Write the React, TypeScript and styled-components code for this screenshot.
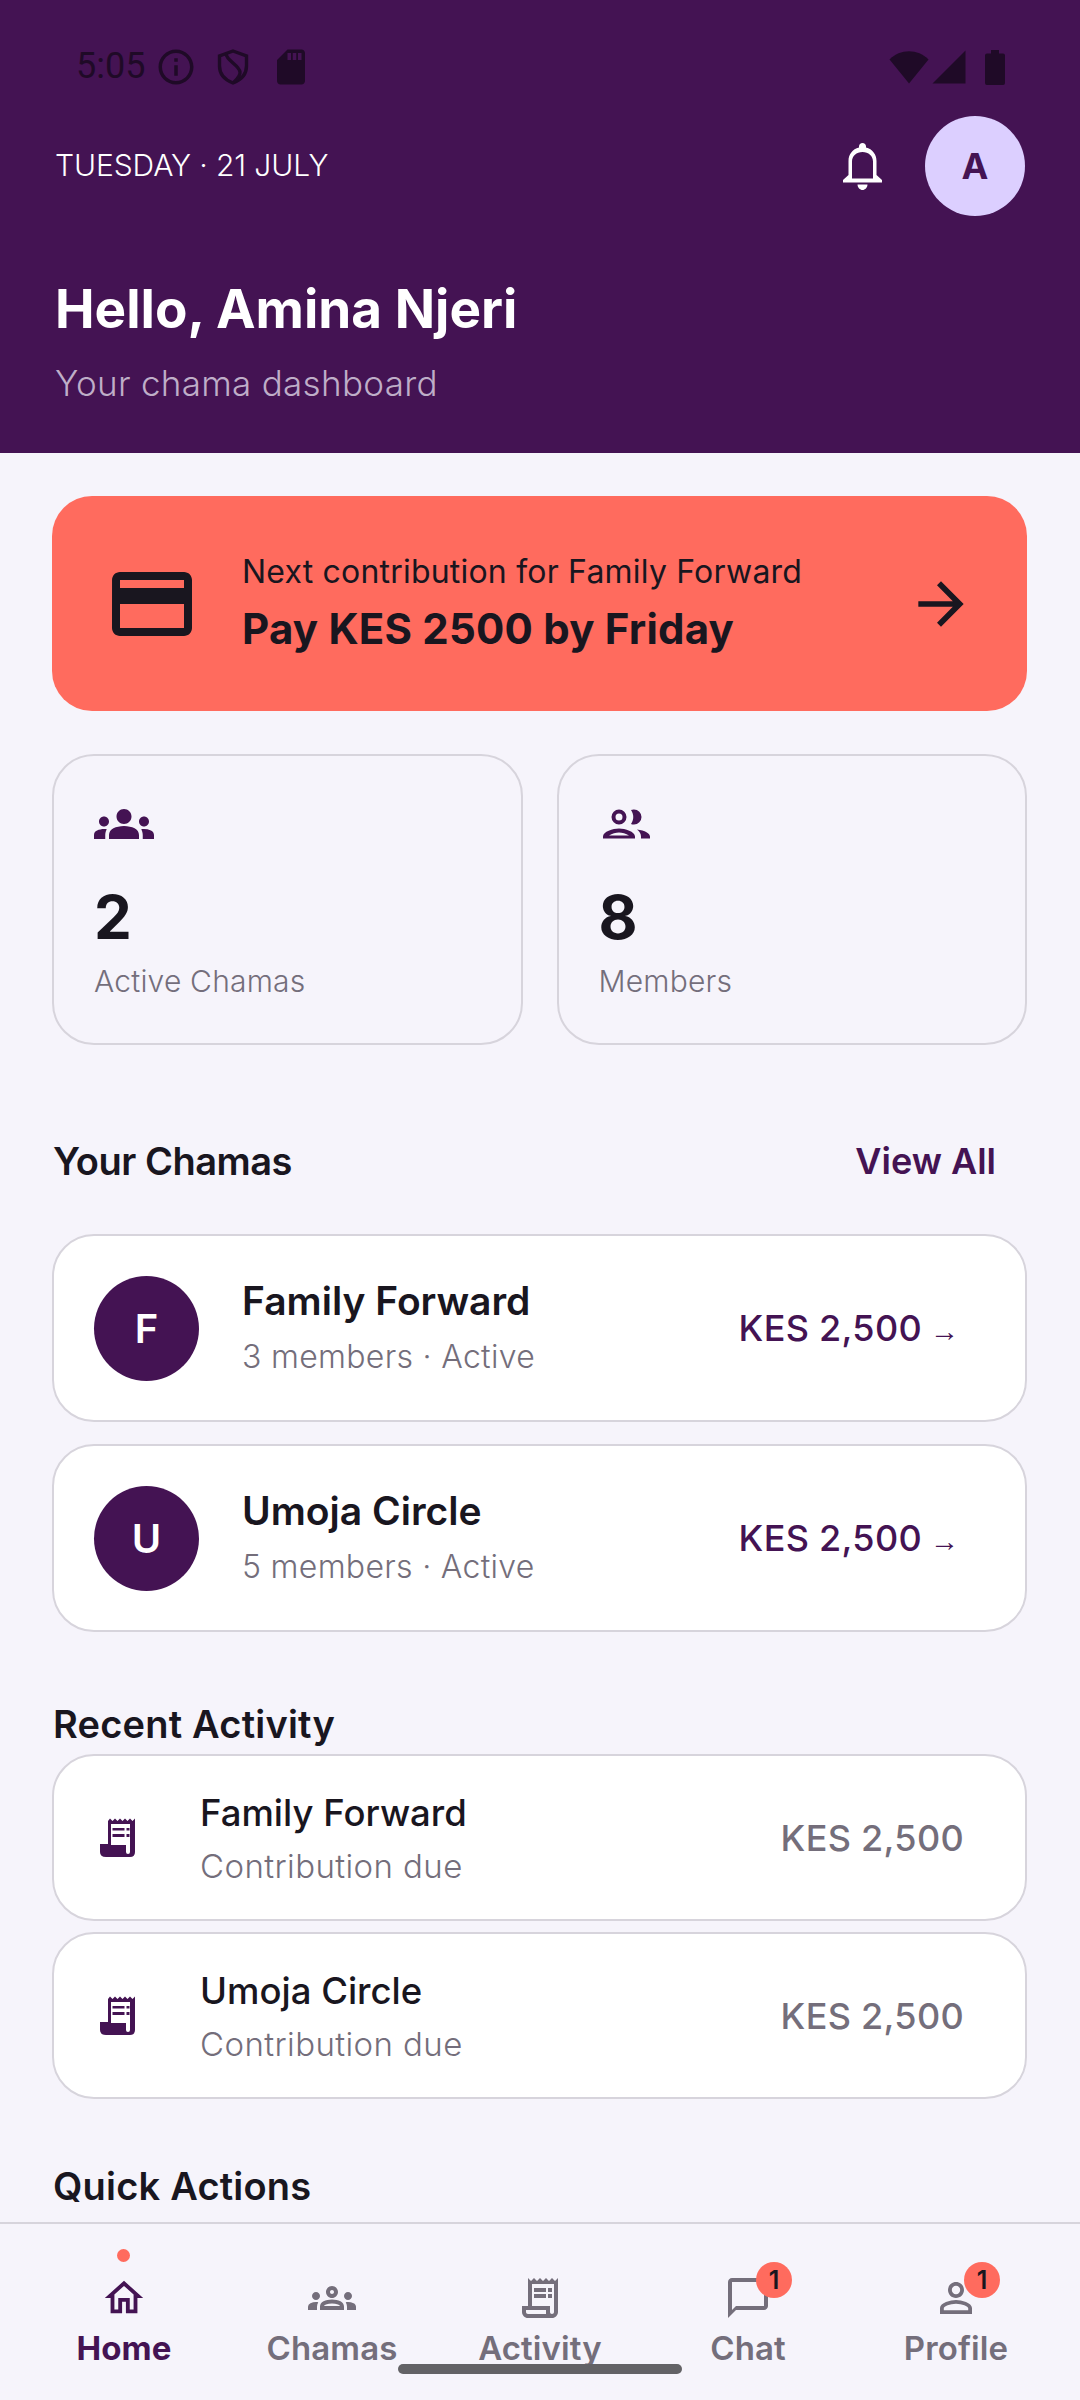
import { FunctionComponent, ReactNode } from "react";
import styled, { createGlobalStyle } from "styled-components";
import {
  MdArrowForward,
  MdChatBubbleOutline,
  MdGroups,
  MdInfoOutline,
  MdOutlineCreditCard,
  MdOutlineGroups,
  MdOutlineHome,
  MdOutlineReceiptLong,
  MdPersonOutline,
  MdSdCard,
} from "react-icons/md";

const PURPLE = "#441353";
const CORAL = "#ff6b5e";
const INK = "#19161f";
const MUTED = "#746e7b";
const LINE = "#d7d4dc";
const STATUS = "#1f0a27";
const PAGE = "#f6f4fb";

const Global = createGlobalStyle`
  html, body {
    margin: 0;
    padding: 0;
    background: ${PAGE};
  }

  * {
    box-sizing: border-box;
  }

  body {
    font-family: Inter, "Noto Sans", sans-serif;
  }
`;

const Screen = styled.div`
  position: relative;
  display: flex;
  flex-direction: column;

  width: 1080px;
  height: 2400px;
  overflow: hidden;

  background: ${PAGE};
`;

const Header = styled.header`
  flex: none;
  height: 453px;

  background: ${PURPLE};
`;

const StatusBar = styled.div`
  display: flex;
  justify-content: space-between;

  height: 116px;
  padding: 46px 75px 0 76px;

  color: ${STATUS};
`;

const StatusGroup = styled.div`
  display: flex;
  align-items: flex-start;
`;

const Clock = styled.span`
  width: 79px;

  font-family: Roboto, sans-serif;
  font-size: 36px;
  font-weight: 400;
  line-height: 40px;
`;

const StatusSlot = styled.span<{ $width: number; $gap?: number }>`
  display: flex;
  align-items: center;
  justify-content: center;

  width: ${(p) => p.$width}px;
  height: 42px;
  margin-left: ${(p) => p.$gap ?? 0}px;
`;

const TopRow = styled.div`
  display: flex;
  align-items: center;

  height: 100px;
  padding: 0 55px;
`;

const DateLabel = styled.span`
  flex: 1;
  margin-top: -2px;

  color: #fff;
  font-size: 30px;
  font-weight: 300;
  letter-spacing: -0.1px;
`;

const Bell = styled.span`
  display: flex;
  margin-right: 43px;

  color: #fff;
`;

const ProfileBubble = styled.div`
  display: flex;
  align-items: center;
  justify-content: center;

  width: 100px;
  height: 100px;

  border-radius: 50%;
  background: #dccfff;
  color: ${PURPLE};
  font-size: 36px;
  font-weight: 700;
`;

const Greeting = styled.h1`
  margin: 61px 0 0;
  padding-left: 55px;

  color: #fff;
  font-size: 53px;
  font-weight: 700;
  line-height: 64px;
`;

const Tagline = styled.p`
  margin: 20px 0 0;
  padding-left: 55px;

  color: #bfaec8;
  font-size: 35px;
  font-weight: 300;
  line-height: 44px;
  letter-spacing: 0.3px;
`;

const Scroll = styled.main`
  flex: 1;
  min-height: 0;
  overflow: hidden;

  padding: 43px 53px 0 52px;
`;

const PayCard = styled.div`
  display: flex;
  align-items: center;

  height: 215px;
  padding: 0 52px;

  border-radius: 40px;
  background: ${CORAL};
  color: ${INK};
`;

const PayText = styled.div`
  flex: 1;
  margin-left: 42px;
`;

const PayLabel = styled.div`
  font-size: 32px;
  font-weight: 400;
  line-height: 42px;
  letter-spacing: 0.2px;
`;

const PayAmount = styled.div`
  margin-top: 8px;

  font-size: 42px;
  font-weight: 700;
  line-height: 56px;
  letter-spacing: 0.2px;
`;

const Stats = styled.div`
  display: grid;
  grid-template-columns: 1fr 1fr;
  gap: 34px;

  margin-top: 43px;
`;

const StatCard = styled.div`
  height: 291px;
  padding: 38px 40px 0;

  border: 2px solid ${LINE};
  border-radius: 42px;
`;

const StatIcon = styled.div`
  display: flex;
  align-items: center;

  height: 60px;

  color: ${PURPLE};
`;

const StatValue = styled.div`
  margin-top: 28px;

  color: ${INK};
  font-size: 60px;
  font-weight: 700;
  line-height: 70px;
`;

const StatLabel = styled.div`
  margin-top: 9px;

  color: ${MUTED};
  font-size: 30px;
  font-weight: 300;
  line-height: 40px;
  letter-spacing: 0.2px;
`;

const SectionHead = styled.div<{ $top: number }>`
  display: flex;
  align-items: center;
  justify-content: space-between;

  height: 50px;
  margin-top: ${(p) => p.$top}px;
  padding-left: 1px;
  padding-right: 31px;
`;

const SectionTitle = styled.h2<{ $spacing: number }>`
  margin: 0;

  color: ${INK};
  font-size: 38px;
  font-weight: 600;
  line-height: 50px;
  letter-spacing: ${(p) => p.$spacing}px;
`;

const ViewAll = styled.span`
  color: ${PURPLE};
  font-size: 36px;
  font-weight: 600;
`;

const List = styled.div<{ $top: number; $gap: number }>`
  display: flex;
  flex-direction: column;
  gap: ${(p) => p.$gap}px;

  margin-top: ${(p) => p.$top}px;
`;

const RowCard = styled.div<{ $height: number; $right: number }>`
  display: flex;
  align-items: center;

  height: ${(p) => p.$height}px;
  padding: 0 ${(p) => p.$right}px 0 40px;

  border: 2px solid ${LINE};
  border-radius: 42px;
  background: #fff;
`;

const Initial = styled.div`
  display: flex;
  flex: none;
  align-items: center;
  justify-content: center;

  width: 105px;
  height: 105px;
  margin-right: 43px;

  border-radius: 50%;
  background: ${PURPLE};
  color: #fff;
  font-size: 40px;
  font-weight: 600;
`;

const RowIcon = styled.div`
  display: flex;
  flex: none;

  width: 48px;
  margin-right: 58px;
  padding-left: 6px;

  color: ${PURPLE};
`;

const RowText = styled.div`
  flex: 1;
`;

const ChamaName = styled.div`
  margin-top: -2px;

  color: ${INK};
  font-size: 39px;
  font-weight: 600;
  line-height: 50px;
`;

const ChamaMeta = styled.div`
  margin-top: 9px;

  color: ${MUTED};
  font-size: 32px;
  font-weight: 300;
  line-height: 44px;
  letter-spacing: 0.3px;
`;

const ActivityName = styled.div`
  margin-top: 2px;

  color: ${INK};
  font-size: 36.5px;
  font-weight: 500;
  line-height: 48px;
`;

const ActivityMeta = styled.div`
  margin-top: 7px;

  color: ${MUTED};
  font-size: 33px;
  font-weight: 300;
  line-height: 44px;
  letter-spacing: 0.4px;
`;

const Amount = styled.div<{ $muted?: boolean }>`
  color: ${(p) => (p.$muted ? MUTED : PURPLE)};
  font-size: 36px;
  font-weight: 500;
  letter-spacing: 0.3px;
`;

const AmountArrow = styled.span`
  margin-left: 8px;

  font-family: "Liberation Sans", sans-serif;
  font-size: 29px;
  font-weight: 700;
  letter-spacing: 0;
`;

const TabBar = styled.nav`
  display: grid;
  flex: none;
  grid-template-columns: repeat(5, 1fr);

  height: 178px;
  padding: 0 20px;

  border-top: 2px solid ${LINE};
`;

const Tab = styled.div<{ $active?: boolean }>`
  position: relative;
  display: flex;
  flex-direction: column;
  align-items: center;

  padding-top: 50px;

  color: ${(p) => (p.$active ? PURPLE : MUTED)};
  font-size: 33px;
  font-weight: ${(p) => (p.$active ? 700 : 600)};
  letter-spacing: 0.1px;
`;

const TabIcon = styled.div`
  position: relative;
  display: flex;
  align-items: center;
  justify-content: center;

  width: 48px;
  height: 48px;
`;

const TabLabel = styled.span`
  margin-top: 4px;
  line-height: 44px;
`;

const ActiveDot = styled.span`
  position: absolute;
  top: 25px;
  left: 50%;

  width: 13px;
  height: 13px;
  margin-left: -7px;

  border-radius: 50%;
  background: ${CORAL};
`;

const CountBadge = styled.span`
  position: absolute;
  top: -12px;
  right: -20px;

  display: flex;
  align-items: center;
  justify-content: center;

  width: 36px;
  height: 36px;

  border-radius: 50%;
  background: ${CORAL};
  color: ${INK};
  font-size: 25px;
  font-weight: 600;
  letter-spacing: 0;
`;

const GestureBar = styled.div`
  position: absolute;
  bottom: 26px;
  left: 398px;

  width: 284px;
  height: 10px;

  border-radius: 5px;
  background: #636266;
`;

const ShieldIcon = () => (
  <svg width="32" height="36" viewBox="0 0 32 36" fill="none" stroke="currentColor" strokeWidth="3.4">
    <path d="M16 2 L29.5 7 V17 C29.5 25 24 31 16 34 C8 31 2.5 25 2.5 17 V7 Z" />
    <path d="M9 5 C10 12 22 16 23 23 C23.5 27 20 30 17 33" />
  </svg>
);

const WifiIcon = () => (
  <svg width="40" height="34" viewBox="0 0 40 34" fill="currentColor">
    <path d="M20 33.5 L0.5 9.5 C11 -1.5 29 -1.5 39.5 9.5 Z" />
  </svg>
);

const SignalIcon = () => (
  <svg width="34" height="34" viewBox="0 0 34 34" fill="currentColor">
    <path d="M33.5 0.5 V33.5 H0.5 Z" />
  </svg>
);

const BatteryIcon = () => (
  <svg width="20" height="35" viewBox="0 0 20 35" fill="currentColor">
    <path d="M6 0 H14 V3.5 H18 Q20 3.5 20 5.5 V33 Q20 35 18 35 H2 Q0 35 0 33 V5.5 Q0 3.5 2 3.5 H6 Z" />
  </svg>
);

const BellIcon = () => (
  <svg width="39" height="47" viewBox="0 0 39 47" fill="currentColor" fillRule="evenodd">
    <path d="M19.5 0 C21.5 0 23 1.5 23 3.5 V4.5 C29.5 6 33.5 11.5 33.5 18 V32 L39 37 V39.5 H0 V37 L5.5 32 V18 C5.5 11.5 9.5 6 16 4.5 V3.5 C16 1.5 17.5 0 19.5 0 Z M19.5 9 C13.5 9 9 13 9 18.5 V35.5 H30 V18.5 C30 13 25.5 9 19.5 9 Z" />
    <path d="M14.5 41.5 H24.5 C24.5 44.5 22 47 19.5 47 C17 47 14.5 44.5 14.5 41.5 Z" />
  </svg>
);

const MembersIcon = () => (
  <svg width="56" height="50" viewBox="4 2.5 56 50" fill="currentColor" fillRule="evenodd">
    <path d="M24 13 A7.5 7.5 0 1 1 24 28 A7.5 7.5 0 1 1 24 13 Z M24 17 A3.5 3.5 0 1 0 24 24 A3.5 3.5 0 1 0 24 17 Z" />
    <path d="M36 13.5 A7.5 7.5 0 0 1 39 13 A7.5 7.5 0 0 1 39 28 A7.5 7.5 0 0 1 36 27.5 C39 23 39 18 36 13.5 Z" />
    <path d="M8 42 V40 C8 35 18 32 24 32 C30 32 40 35 40 40 V42 Z M14 39 H34 C31 37 27 36 24 36 C21 36 17 37 14 39 Z" />
    <path d="M42 33 C50 34 55 37 55 40 V42 H46 V40 C46 37 44.5 35 42 33 Z" />
  </svg>
);

const ReceiptIcon = () => (
  <svg width="36" height="39" viewBox="0 0 36 39" fill="currentColor" fillRule="evenodd">
    <path d="M8 3 L10 0.5 12.5 3 15 0.5 17.5 3 20 0.5 22.5 3 25 0.5 27.5 3 30 0.5 32.5 3 35 0.5 V34 Q35 39 30 39 H6 Q0 39 0 34 V26 H8 Z M11 6 V27 H26 V34 Q26 36 28 36 Q30 36 30 34 V6 Z" />
    <path d="M12.5 10 H24.5 V12.5 H12.5 Z M26.5 10 H29.5 V12.5 H26.5 Z M12.5 16 H24.5 V19 H12.5 Z M26.5 16 H29.5 V19 H26.5 Z" />
  </svg>
);

const chamas = [
  { initial: "F", name: "Family Forward", meta: "3 members · Active" },
  { initial: "U", name: "Umoja Circle", meta: "5 members · Active" },
];

const activity = ["Family Forward", "Umoja Circle"];

const tabs: { label: string; icon: ReactNode; active?: boolean; badge?: number }[] = [
  { label: "Home", icon: <MdOutlineHome size={46} />, active: true },
  { label: "Chamas", icon: <MdOutlineGroups size={48} /> },
  { label: "Activity", icon: <MdOutlineReceiptLong size={48} /> },
  { label: "Chat", icon: <MdChatBubbleOutline size={48} />, badge: 1 },
  { label: "Profile", icon: <MdPersonOutline size={48} />, badge: 1 },
];

const App: FunctionComponent = () => {
  return (
    <Screen>
      <Global />
      <Header>
        <StatusBar>
          <StatusGroup>
            <Clock>5:05</Clock>
            <StatusSlot $width={42}>
              <MdInfoOutline size={42} />
            </StatusSlot>
            <StatusSlot $width={72}>
              <ShieldIcon />
            </StatusSlot>
            <StatusSlot $width={44}>
              <MdSdCard size={42} />
            </StatusSlot>
          </StatusGroup>
          <StatusGroup>
            <StatusSlot $width={40}>
              <WifiIcon />
            </StatusSlot>
            <StatusSlot $width={34} $gap={3}>
              <SignalIcon />
            </StatusSlot>
            <StatusSlot $width={20} $gap={19}>
              <BatteryIcon />
            </StatusSlot>
          </StatusGroup>
        </StatusBar>
        <TopRow>
          <DateLabel>TUESDAY · 21 JULY</DateLabel>
          <Bell>
            <BellIcon />
          </Bell>
          <ProfileBubble>A</ProfileBubble>
        </TopRow>
        <Greeting>Hello, Amina Njeri</Greeting>
        <Tagline>Your chama dashboard</Tagline>
      </Header>

      <Scroll>
        <PayCard>
          <MdOutlineCreditCard size={96} />
          <PayText>
            <PayLabel>Next contribution for Family Forward</PayLabel>
            <PayAmount>Pay KES 2500 by Friday</PayAmount>
          </PayText>
          <MdArrowForward size={68} />
        </PayCard>

        <Stats>
          <StatCard>
            <StatIcon>
              <MdGroups size={60} />
            </StatIcon>
            <StatValue>2</StatValue>
            <StatLabel>Active Chamas</StatLabel>
          </StatCard>
          <StatCard>
            <StatIcon>
              <MembersIcon />
            </StatIcon>
            <StatValue>8</StatValue>
            <StatLabel>Members</StatLabel>
          </StatCard>
        </Stats>

        <SectionHead $top={91}>
          <SectionTitle $spacing={-0.5}>Your Chamas</SectionTitle>
          <ViewAll>View All</ViewAll>
        </SectionHead>
        <List $top={48} $gap={22}>
          {chamas.map((c) => (
            <RowCard key={c.name} $height={188} $right={66}>
              <Initial>{c.initial}</Initial>
              <RowText>
                <ChamaName>{c.name}</ChamaName>
                <ChamaMeta>{c.meta}</ChamaMeta>
              </RowText>
              <Amount>
                KES 2,500<AmountArrow>→</AmountArrow>
              </Amount>
            </RowCard>
          ))}
        </List>

        <SectionHead $top={67}>
          <SectionTitle $spacing={0.2}>Recent Activity</SectionTitle>
        </SectionHead>
        <List $top={5} $gap={11}>
          {activity.map((name) => (
            <RowCard key={name} $height={167} $right={61}>
              <RowIcon>
                <ReceiptIcon />
              </RowIcon>
              <RowText>
                <ActivityName>{name}</ActivityName>
                <ActivityMeta>Contribution due</ActivityMeta>
              </RowText>
              <Amount $muted>KES 2,500</Amount>
            </RowCard>
          ))}
        </List>

        <SectionHead $top={62}>
          <SectionTitle $spacing={0.2}>Quick Actions</SectionTitle>
        </SectionHead>
      </Scroll>

      <TabBar>
        {tabs.map((t) => (
          <Tab key={t.label} $active={t.active}>
            {t.active && <ActiveDot />}
            <TabIcon>
              {t.icon}
              {t.badge && <CountBadge>{t.badge}</CountBadge>}
            </TabIcon>
            <TabLabel>{t.label}</TabLabel>
          </Tab>
        ))}
      </TabBar>
      <GestureBar />
    </Screen>
  );
};

export default App;
